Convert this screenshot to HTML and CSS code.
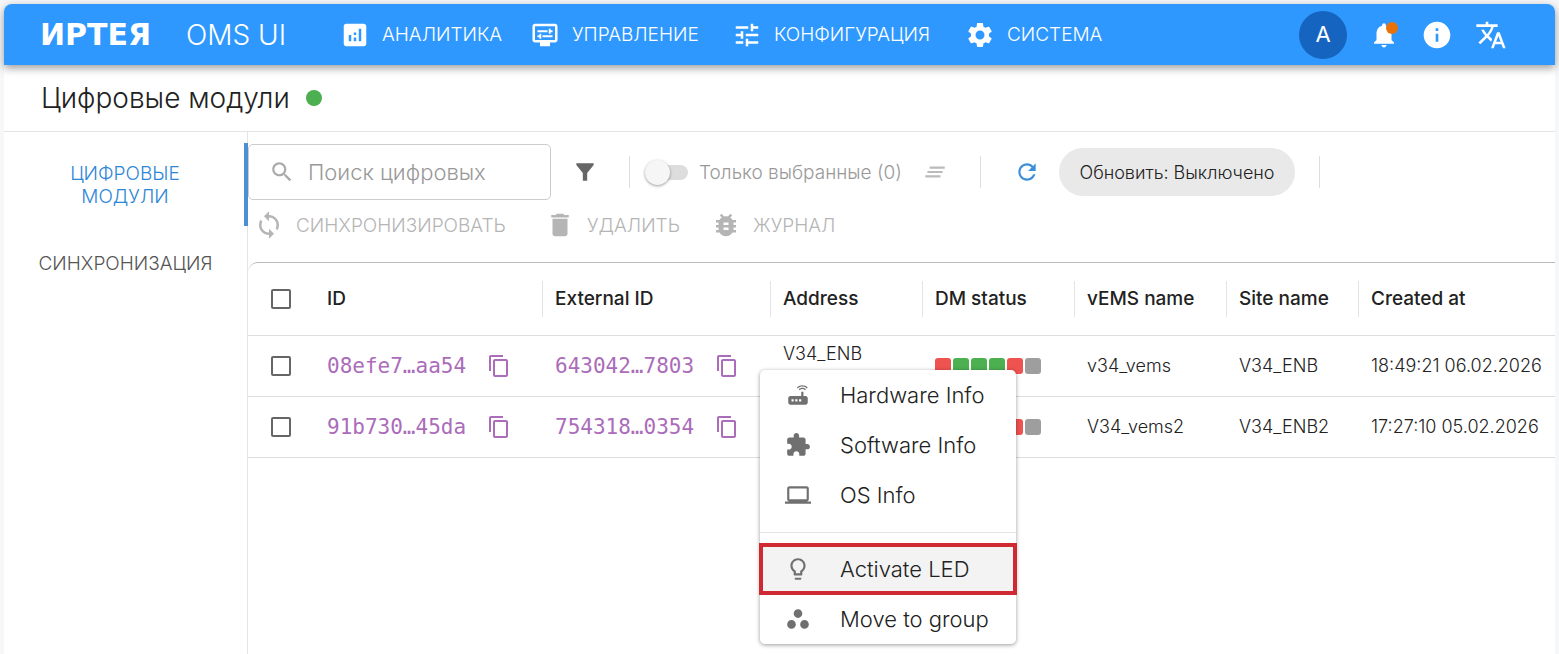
FILE: index.html
```html
<!DOCTYPE html>
<html lang="ru">
<head>
	<meta charset="UTF-8">
	<title>OMS UI - Цифровые модули</title>
	<link rel="stylesheet" href="styles.css">
</head>
<body>

	<!-- icons -->
	<svg class="sprite" aria-hidden="true">
		<symbol id="i-copy" viewBox="0 0 24 24"><path d="M16 1H4c-1.1 0-2 .9-2 2v14h2V3h12V1zm3 4H8c-1.1 0-2 .9-2 2v14c0 1.1.9 2 2 2h11c1.1 0 2-.9 2-2V7c0-1.1-.9-2-2-2zm0 16H8V7h11v14z"/></symbol>
	</svg>

	<div class="app">
		<header class="topbar">
			<a class="logo" href="#">ИРТЕЯ</a>
			<span class="product">OMS UI</span>
			<nav class="nav">
				<a href="#">
					<svg class="icon-lg" viewBox="0 0 24 24"><path d="M19 3H5c-1.1 0-2 .9-2 2v14c0 1.1.9 2 2 2h14c1.1 0 2-.9 2-2V5c0-1.1-.9-2-2-2zM9 17H7v-5h2v5zm4 0h-2v-3h2v3zm0-5h-2v-2h2v2zm4 5h-2V7h2v10z"/></svg>
					АНАЛИТИКА
				</a>
				<a href="#">
					<svg class="icon-lg" viewBox="0 0 24 24"><path d="M20 3H4c-1.1 0-2 .9-2 2v11c0 1.1.9 2 2 2h4v3h8v-3h4c1.1 0 2-.9 2-2V5c0-1.1-.9-2-2-2zm0 13H4V5h16v11zM6 8.25h8v1.5H6zM16.5 9.75H18v-1.5h-1.5V7H15v4h1.5zM10 12.25h8v1.5h-8zM7.500 15H9v-4H7.500v1.250H6v1.500h1.500z"/></svg>
					УПРАВЛЕНИЕ
				</a>
				<a href="#">
					<svg class="icon-lg" viewBox="0 0 24 24"><path d="M3 17v2h6v-2H3zM3 5v2h10V5H3zm10 16v-2h8v-2h-8v-2h-2v6h2zM7 9v2H3v2h4v2h2V9H7zm14 4v-2H11v2h10zm-6-4h2V7h4V5h-4V3h-2v6z"/></svg>
					КОНФИГУРАЦИЯ
				</a>
				<a href="#">
					<svg class="icon-lg" viewBox="0 0 24 24"><path d="M19.140 12.940c.04-.3.06-.61.06-.94 0-.32-.02-.64-.07-.94l2.030-1.580c.18-.14.23-.41.12-.61l-1.920-3.320c-.12-.22-.37-.29-.59-.22l-2.390.96c-.5-.38-1.030-.7-1.620-.94l-.36-2.540c-.04-.24-.24-.41-.48-.41h-3.840c-.24 0-.43.17-.47.41l-.36 2.540c-.59.24-1.130.57-1.620.94l-2.390-.96c-.22-.08-.47 0-.59.22L2.740 8.870c-.12.21-.08.47.12.61l2.030 1.580c-.05.3-.09.63-.09.94s.02.64.07.94l-2.030 1.580c-.18.14-.23.41-.12.61l1.920 3.320c.12.22.37.29.59.22l2.390-.96c.5.38 1.030.7 1.620.94l.36 2.540c.05.24.24.41.48.41h3.840c.24 0 .44-.17.47-.41l.36-2.540c.59-.24 1.130-.56 1.620-.94l2.390.96c.22.08.47 0 .59-.22l1.920-3.320c.12-.22.07-.47-.12-.61l-2.010-1.580zM12 15.600c-1.980 0-3.600-1.620-3.600-3.600s1.620-3.600 3.600-3.600 3.600 1.620 3.600 3.600-1.620 3.600-3.600 3.600z"/></svg>
					СИСТЕМА
				</a>
			</nav>
			<div class="user-tools">
				<button class="avatar">A</button>
				<button class="tool bell" aria-label="Уведомления">
					<svg class="icon-lg" viewBox="0 0 24 24"><path d="M12 22c1.100 0 2-.9 2-2h-4c0 1.100.89 2 2 2zm6-6v-5c0-3.070-1.640-5.640-4.500-6.320V4c0-.83-.67-1.500-1.500-1.500s-1.500.67-1.500 1.500v.68C7.630 5.360 6 7.920 6 11v5l-2 2v1h16v-1l-2-2z"/></svg>
				</button>
				<button class="tool" aria-label="Информация">
					<svg class="icon-xl" viewBox="0 0 24 24"><path d="M12 2C6.480 2 2 6.480 2 12s4.480 10 10 10 10-4.480 10-10S17.520 2 12 2zm1 15h-2v-6h2v6zm0-8h-2V7h2v2z"/></svg>
				</button>
				<button class="tool" aria-label="Язык">
					<svg class="icon-xl" viewBox="0 0 24 24"><path d="M12.870 15.070l-2.540-2.510.03-.03c1.740-1.940 2.980-4.170 3.710-6.530H17V4h-7V2H8v2H1v1.990h11.170C11.500 7.920 10.440 9.750 9 11.350 8.070 10.320 7.300 9.190 6.690 8h-2c.73 1.630 1.730 3.170 2.980 4.560l-5.090 5.020L4 19l5-5 3.110 3.110.76-2.040zM18.500 10h-2L12 22h2l1.120-3h4.750L21 22h2l-4.500-12zm-2.620 7l1.620-4.330L19.120 17h-3.240z"/></svg>
				</button>
			</div>
		</header>

		<div class="page-title">
			<h1>Цифровые модули</h1>
			<span class="online"></span>
		</div>

		<div class="content">
			<nav class="side">
				<a class="active" href="#">ЦИФРОВЫЕ МОДУЛИ</a>
				<a href="#">СИНХРОНИЗАЦИЯ</a>
			</nav>

			<main class="main">
				<div class="toolbar">
					<label class="search">
						<svg class="icon" viewBox="0 0 24 24"><path d="M15.500 14h-.79l-.28-.27C15.410 12.590 16 11.110 16 9.500 16 5.910 13.090 3 9.500 3S3 5.910 3 9.500 5.910 16 9.500 16c1.610 0 3.090-.59 4.230-1.570l.27.28v.79l5 4.990L20.490 19l-4.990-5zm-6 0C7.010 14 5 11.990 5 9.500S7.010 5 9.500 5 14 7.010 14 9.500 11.990 14 9.500 14z"/></svg>
						<input type="text" placeholder="Поиск цифровых" aria-label="Поиск цифровых">
					</label>
					<button class="filter" aria-label="Фильтр">
						<svg class="icon" viewBox="0 0 24 24"><path d="M4 4h16v1.500L14 13v7h-4v-7L4 5.500z"/></svg>
					</button>
					<div class="group selected">
						<input class="switch" type="checkbox" id="only-selected" disabled>
						<label for="only-selected">Только выбранные (0)</label>
						<button class="clear" aria-label="Сбросить" disabled>
							<svg class="icon" viewBox="0 0 24 24"><path d="M5 13h14v-2H5v2zm-2 4h14v-2H3v2zM7 7v2h14V7H7z"/></svg>
						</button>
					</div>
					<div class="group update">
						<button class="refresh" aria-label="Обновить">
							<svg class="icon" viewBox="0 0 24 24"><path d="M17.650 6.350C16.200 4.900 14.210 4 12 4c-4.420 0-7.990 3.580-7.990 8s3.570 8 7.990 8c3.730 0 6.840-2.550 7.730-6h-2.080c-.82 2.330-3.040 4-5.650 4-3.310 0-6-2.690-6-6s2.690-6 6-6c1.660 0 3.140.69 4.220 1.780L13 11h7V4l-2.350 2.350z"/></svg>
						</button>
						<button class="chip">Обновить: Выключено</button>
					</div>
					<div class="group"></div>
				</div>

				<div class="actions">
					<button disabled>
						<svg class="icon-lg" viewBox="0 0 24 24"><path d="M12 4V1L8 5l4 4V6c3.310 0 6 2.690 6 6 0 1.010-.25 1.970-.7 2.800l1.460 1.460C19.540 15.030 20 13.570 20 12c0-4.420-3.580-8-8-8zm0 14c-3.310 0-6-2.690-6-6 0-1.010.25-1.970.7-2.800L5.240 7.740C4.460 8.970 4 10.430 4 12c0 4.420 3.580 8 8 8v3l4-4-4-4v3z"/></svg>
						СИНХРОНИЗИРОВАТЬ
					</button>
					<button disabled>
						<svg class="icon-lg" viewBox="0 0 24 24"><path d="M6 19c0 1.100.9 2 2 2h8c1.100 0 2-.9 2-2V7H6v12zM19 4h-3.500l-1-1h-5l-1 1H5v2h14V4z"/></svg>
						УДАЛИТЬ
					</button>
					<button disabled>
						<svg class="icon-lg" viewBox="0 0 24 24"><path d="M20 8h-2.810c-.45-.78-1.070-1.450-1.820-1.960L17 4.410 15.590 3l-2.170 2.170C12.960 5.060 12.490 5 12 5s-.96.06-1.410.17L8.410 3 7 4.410l1.620 1.630C7.880 6.550 7.260 7.220 6.810 8H4v2h2.090c-.05.33-.09.66-.09 1v1H4v2h2v1c0 .34.04.67.09 1H4v2h2.810c1.040 1.790 2.970 3 5.190 3s4.150-1.210 5.190-3H20v-2h-2.090c.05-.33.09-.66.09-1v-1h2v-2h-2v-1c0-.34-.04-.67-.09-1H20V8zm-6 8h-4v-2h4v2zm0-4h-4v-2h4v2z"/></svg>
						ЖУРНАЛ
					</button>
				</div>

				<div class="table-wrap">
					<table>
						<colgroup>
							<col class="c-check"><col class="c-id"><col class="c-id"><col class="c-mid"><col class="c-mid"><col class="c-mid"><col class="c-site"><col>
						</colgroup>
						<thead>
							<tr>
								<th><input type="checkbox" aria-label="Выбрать все"></th>
								<th><span>ID</span></th>
								<th><span class="sep">External ID</span></th>
								<th><span class="sep">Address</span></th>
								<th><span class="sep">DM status</span></th>
								<th><span class="sep">vEMS name</span></th>
								<th><span class="sep">Site name</span></th>
								<th><span class="sep">Created at</span></th>
							</tr>
						</thead>
						<tbody>
							<tr>
								<td><input type="checkbox" aria-label="Выбрать 08efe7…aa54"></td>
								<td><div class="code">08efe7…aa54 <button aria-label="Копировать"><svg><use href="#i-copy"/></svg></button></div></td>
								<td><div class="code">643042…7803 <button aria-label="Копировать"><svg><use href="#i-copy"/></svg></button></div></td>
								<td class="address">V34_ENB</td>
								<td>
									<div class="status"><i class="red"></i><i class="green"></i><i class="green"></i><i class="green"></i><i class="red"></i><i></i></div>
								</td>
								<td>v34_vems</td>
								<td>V34_ENB</td>
								<td>18:49:21 06.02.2026</td>
							</tr>
							<tr>
								<td><input type="checkbox" aria-label="Выбрать 91b730…45da"></td>
								<td><div class="code">91b730…45da <button aria-label="Копировать"><svg><use href="#i-copy"/></svg></button></div></td>
								<td><div class="code">754318…0354 <button aria-label="Копировать"><svg><use href="#i-copy"/></svg></button></div></td>
								<td class="address"></td>
								<td>
									<div class="status"><i class="red"></i><i class="green"></i><i class="green"></i><i class="green"></i><i class="red"></i><i></i></div>
								</td>
								<td>V34_vems2</td>
								<td>V34_ENB2</td>
								<td>17:27:10 05.02.2026</td>
							</tr>
						</tbody>
					</table>
				</div>
			</main>
		</div>
	</div>

	<!-- context menu of a row -->
	<div class="menu" role="menu">
		<button role="menuitem">
			<svg class="icon" viewBox="0 0 24 24"><path d="M20.200 5.900l.8-.8C19.600 3.700 17.800 3 16 3s-3.600.7-5 2.100l.8.8C13 4.800 14.500 4.200 16 4.200s3 .6 4.200 1.700zm-.9.8c-.9-.9-2.100-1.400-3.300-1.400s-2.400.5-3.300 1.400l.8.8c.7-.7 1.600-1 2.500-1 .9 0 1.800.3 2.500 1l.8-.8zM19 13h-2V9h-2v4H5c-1.100 0-2 .9-2 2v4c0 1.100.9 2 2 2h14c1.100 0 2-.9 2-2v-4c0-1.100-.9-2-2-2zM8 18H6v-2h2v2zm3.500 0h-2v-2h2v2zm3.500 0h-2v-2h2v2z"/></svg>
			Hardware Info
		</button>
		<button role="menuitem">
			<svg class="icon" viewBox="0 0 24 24"><path d="M20.500 11H19V7c0-1.100-.9-2-2-2h-4V3.500C13 2.120 11.880 1 10.500 1S8 2.120 8 3.500V5H4c-1.100 0-1.990.9-1.990 2v3.800H3.500c1.490 0 2.700 1.210 2.700 2.700s-1.210 2.700-2.700 2.700H2V20c0 1.100.9 2 2 2h3.800v-1.500c0-1.490 1.210-2.700 2.700-2.700 1.490 0 2.700 1.210 2.700 2.700V22H17c1.100 0 2-.9 2-2v-4h1.500c1.380 0 2.500-1.120 2.500-2.500S21.880 11 20.500 11z"/></svg>
			Software Info
		</button>
		<button role="menuitem">
			<svg class="icon" viewBox="0 0 24 24"><path d="M20 18c1.100 0 1.990-.9 1.990-2L22 6c0-1.100-.9-2-2-2H4c-1.100 0-2 .9-2 2v10c0 1.100.9 2 2 2H0v2h24v-2h-4zM4 6h16v10H4V6z"/></svg>
			OS Info
		</button>
		<hr>
		<button class="marked" role="menuitem">
			<svg class="icon" viewBox="0 0 24 24"><path d="M9 21c0 .5.4 1 1 1h4c.6 0 1-.5 1-1v-1H9v1zm3-19C8.100 2 5 5.100 5 9c0 2.400 1.200 4.500 3 5.700V17c0 .5.4 1 1 1h6c.6 0 1-.5 1-1v-2.300c1.800-1.300 3-3.400 3-5.700 0-3.900-3.100-7-7-7zm2.900 11.100l-.9.6V16h-4v-2.300l-.8-.6C7.800 12.200 7 10.600 7 9c0-2.800 2.200-5 5-5s5 2.200 5 5c0 1.600-.8 3.200-2.100 4.100z"/></svg>
			Activate LED
		</button>
		<button role="menuitem">
			<svg class="icon" viewBox="0 0 24 24"><path d="M6 13c-2.200 0-4 1.800-4 4s1.800 4 4 4 4-1.800 4-4-1.800-4-4-4zm6-10C9.800 3 8 4.800 8 7s1.800 4 4 4 4-1.800 4-4-1.800-4-4-4zm6 10c-2.200 0-4 1.800-4 4s1.800 4 4 4 4-1.800 4-4-1.800-4-4-4z"/></svg>
			Move to group
		</button>
	</div>

</body>
</html>
```
FILE: styles.css
```css
*{
	box-sizing: border-box;
}
body{
	margin: 0;
	padding: 4px 4px 0;
	font: 300 19px/23px Inter, "Open Sans", sans-serif;
	color: #222;
	background-color: #f5f7f9;
}
button, input{
	font: inherit;
	color: inherit;
}
button{
	padding: 0;
	border: 0;
	background: none;
}
a{
	color: inherit;
	text-decoration: none;
}
svg{
	display: block;
	flex: none;
	fill: currentColor;
}
.sprite{
	position: absolute;
	width: 0;
	height: 0;
}
.icon{
	width: 26px;
	height: 26px;
}
.icon-lg{
	width: 30px;
	height: 30px;
}
.icon-xl{
	width: 32px;
	height: 32px;
}
.app{
	display: flex;
	flex-direction: column;
	min-height: calc(100vh - 4px);
	background-color: #fff;
	border-radius: 8px 8px 0 0;
}

/* top bar */
.topbar{
	display: flex;
	align-items: center;
	height: 61px;
	padding: 0 48px 0 36px;
	color: #fff;
	background-color: #2e98ff;
	border-radius: 8px 8px 0 0;
	box-shadow: 0 3px 8px rgba(0,0,0,.4);
}
.logo{
	width: 146px;
	font: bold 30px/32px "DejaVu Sans", sans-serif;
}
.product{
	width: 154px;
	font-size: 28px;
	line-height: 32px;
}
.nav{
	display: grid;
	grid-template-columns: 190px 202px 233px auto;
}
.nav a{
	display: flex;
	align-items: center;
	gap: 12px;
}
.user-tools{
	display: flex;
	align-items: center;
	gap: 22px;
	margin-left: auto;
}
.avatar{
	width: 48px;
	height: 48px;
	font-size: 22px;
	font-weight: 400;
	border-radius: 50%;
	background-color: #1565c0;
}
.bell{
	position: relative;
}
.bell::after{
	content: "";
	position: absolute;
	top: 2px;
	right: 1px;
	width: 12px;
	height: 12px;
	border-radius: 50%;
	background-color: #e8710a;
}

/* title */
.page-title{
	display: flex;
	align-items: center;
	gap: 16px;
	height: 67px;
	padding-left: 37px;
	border-bottom: 1px solid #e4e4e4;
}
.page-title h1{
	margin: 0;
	font-size: 28px;
	line-height: 32px;
	font-weight: 300;
}
.online{
	width: 16px;
	height: 16px;
	border-radius: 50%;
	background-color: #4caf50;
}
.content{
	flex: 1;
	display: flex;
}

/* side tabs */
.side{
	flex: none;
	display: flex;
	flex-direction: column;
	width: 244px;
	padding-top: 11px;
	text-align: center;
	color: #555;
	border-right: 1px solid #e4e4e4;
}
.side a{
	display: flex;
	align-items: center;
	justify-content: center;
	min-height: 74px;
	padding: 0 30px;
}
.side .active{
	min-height: 83px;
	margin-right: -1px;
	padding: 0 48px 0 50px;
	color: #2e86d6;
	border-right: 4px solid #4a90d2;
}

/* toolbar */
.main{
	flex: 1;
	min-width: 0;
}
.toolbar{
	display: flex;
	align-items: center;
	padding-top: 12px;
}
.search{
	display: flex;
	align-items: center;
	gap: 13px;
	width: 303px;
	height: 56px;
	padding: 0 20px;
	color: #aaa;
	border: 1px solid #ccc;
	border-radius: 5px;
}
.search input{
	flex: 1;
	min-width: 0;
	padding: 0;
	font-size: 22px;
	border: 0;
	outline: 0;
	background: none;
}
.search input::placeholder{
	color: #999;
}
.filter{
	margin: 0 31px 0 21px;
	color: #666;
}
.group{
	display: flex;
	align-items: center;
	height: 32px;
	border-left: 1px solid #ddd;
}
.selected{
	width: 351px;
	padding-left: 15px;
	color: #999;
}
.switch{
	appearance: none;
	display: flex;
	align-items: center;
	width: 43px;
	height: 15px;
	margin: 0 11px 0 0;
	border-radius: 8px;
	background-color: #ddd;
}
.switch::before{
	content: "";
	width: 25px;
	height: 25px;
	border-radius: 50%;
	background-color: #f6f6f6;
	box-shadow: 0 1px 3px rgba(0,0,0,.4);
}
.selected label{
	flex: 1;
	white-space: nowrap;
}
.clear{
	margin-right: 32px;
	color: #bbb;
}
.update{
	width: 339px;
	padding: 0 24px 0 33px;
	gap: 19px;
}
.refresh{
	color: #3a8fd8;
}
.chip{
	flex: 1;
	height: 48px;
	font-size: 18px;
	white-space: nowrap;
	border-radius: 24px;
	background-color: #e9e9e9;
}
.actions{
	display: grid;
	grid-template-columns: 291px 166px auto;
	justify-content: start;
	padding: 10px 0 0 6px;
	color: #b5b5b5;
}
.actions button{
	display: flex;
	align-items: center;
	gap: 12px;
}

/* table */
.table-wrap{
	margin-top: 22px;
	border-top: 1px solid #bbb;
	border-radius: 10px 0 0 0;
}
table{
	width: 100%;
	table-layout: fixed;
	border-collapse: collapse;
	font-size: 18px;
}
.c-check{
	width: 66px;
}
.c-id{
	width: 228px;
}
.c-mid{
	width: 152px;
}
.c-site{
	width: 132px;
}
th, td{
	padding: 0;
	text-align: left;
	white-space: nowrap;
	border-bottom: 1px solid #ddd;
}
th{
	height: 72px;
	font-size: 19px;
	font-weight: 500;
}
th span{
	display: flex;
	align-items: center;
	height: 36px;
	padding-left: 12px;
	border-left: 1px solid transparent;
}
th .sep{
	border-left-color: #e4e4e4;
}
td{
	height: 61px;
	padding-left: 13px;
}
th:first-child, td:first-child{
	padding-left: 23px;
}
td.address{
	padding-top: 6px;
	vertical-align: top;
}
table input{
	appearance: none;
	display: block;
	width: 20px;
	height: 20px;
	margin: 0;
	border: 2px solid #666;
	border-radius: 2px;
}
.code{
	display: flex;
	align-items: center;
	gap: 21px;
	font: 21px/24px "DejaVu Sans Mono", monospace;
	color: #ab6cba;
}
.code svg{
	width: 24px;
	height: 24px;
}
.status{
	display: flex;
	gap: 2px;
}
.status i{
	width: 16px;
	height: 16px;
	border-radius: 3px;
	background-color: #9e9e9e;
}
.status .red{
	background-color: #ef5350;
}
.status .green{
	background-color: #4caf50;
}

/* context menu */
.menu{
	position: absolute;
	top: 370px;
	left: 760px;
	width: 256px;
	background-color: #fff;
	border-radius: 5px;
	box-shadow: 0 1px 4px rgba(0,0,0,.4);
}
.menu button{
	display: flex;
	align-items: center;
	gap: 29px;
	width: 100%;
	height: 50px;
	padding-left: 25px;
	font-size: 22px;
}
.menu svg{
	color: #707070;
}
.menu hr{
	margin: 12px 0 11px;
	border: 0;
	border-top: 1px solid #e4e4e4;
}
/* red frame round the current item */
.menu .marked{
	background-color: #f3f3f3;
	outline: 4px solid #cf2a32;
	outline-offset: -3px;
}
```
